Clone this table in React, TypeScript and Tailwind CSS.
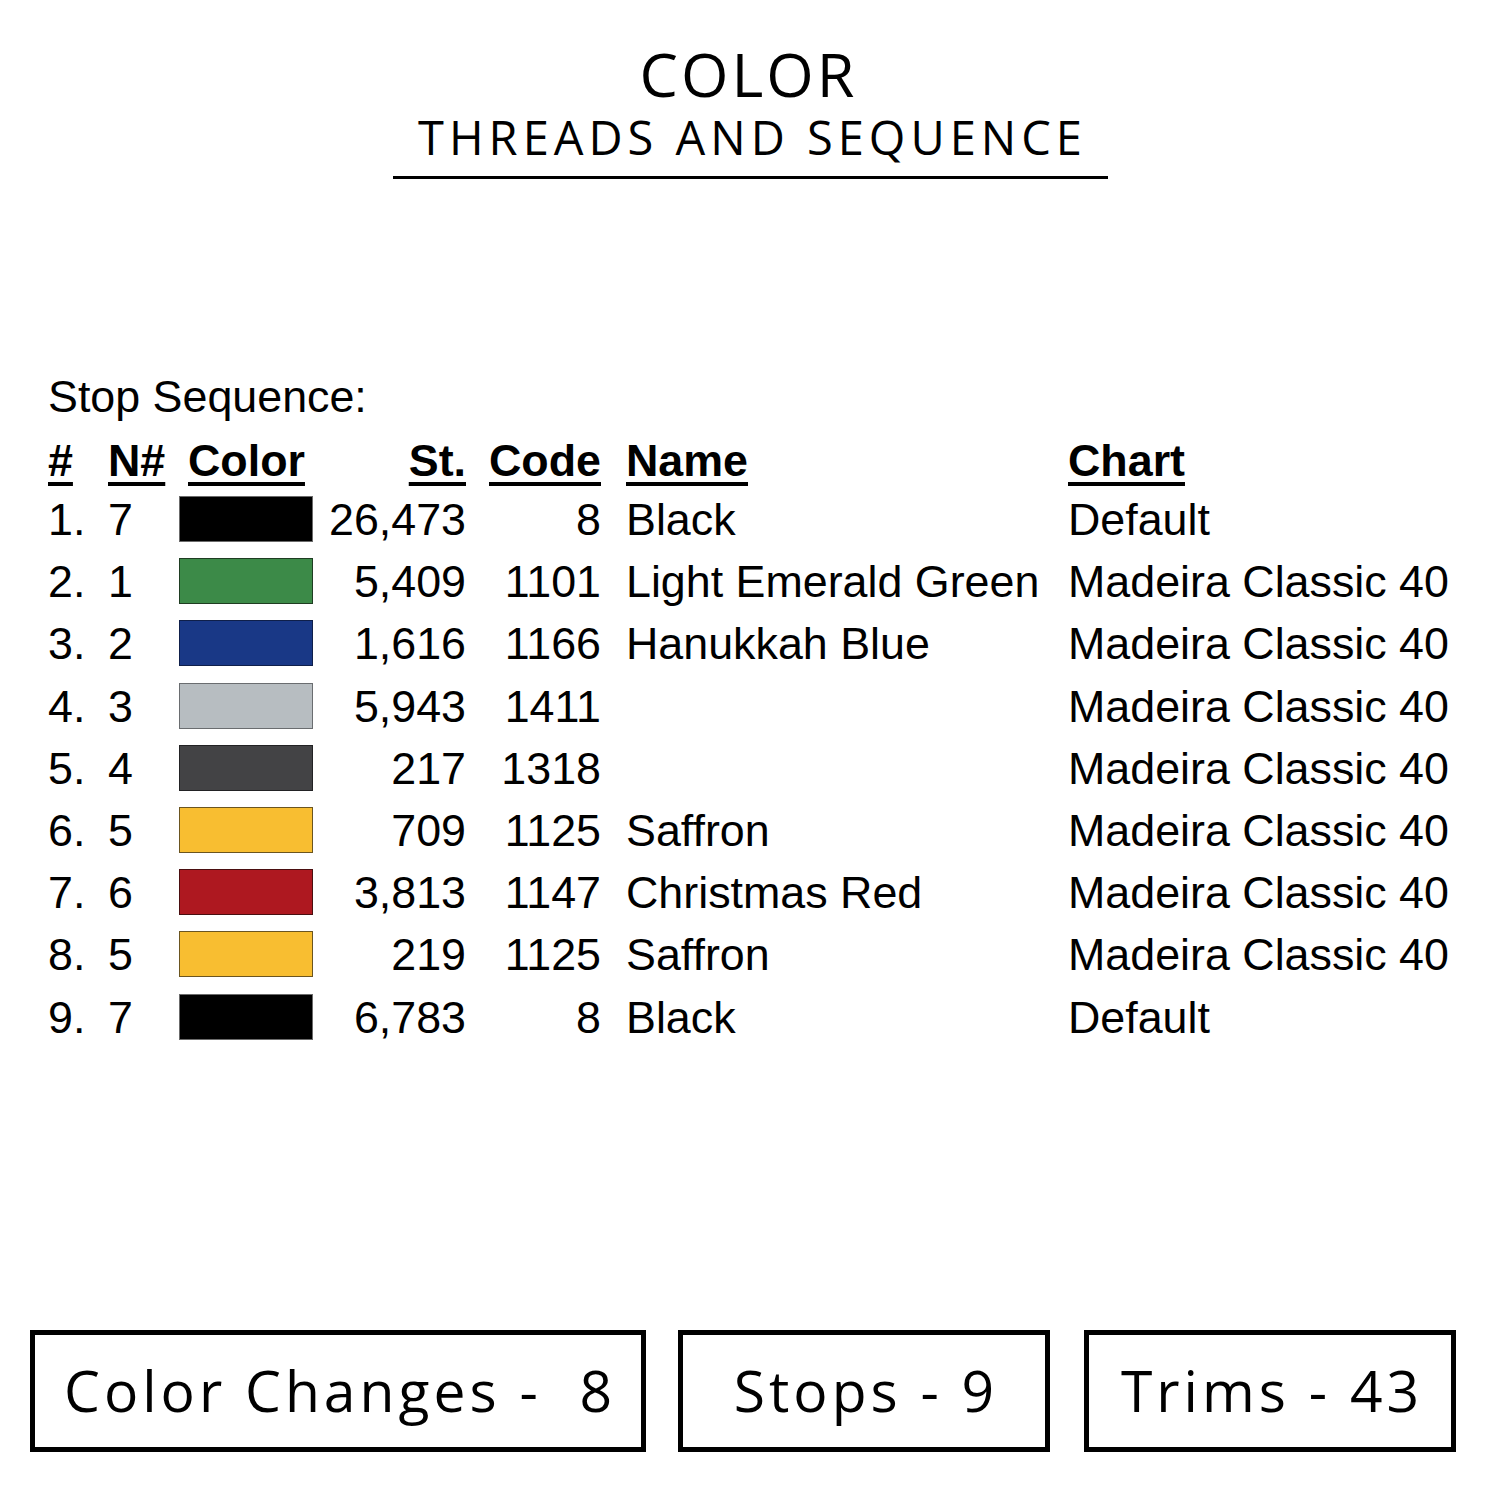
import React from "react";

type Row = { n: string; nn: string; color: string; border: string; st: string; code: string; name: string; chart: string };

const rows: Row[] = [
  { n: "1.", nn: "7", color: "#000000", border: "#6b6b6b", st: "26,473", code: "8", name: "Black", chart: "Default" },
  { n: "2.", nn: "1", color: "#3c8a48", border: "#1f3d22", st: "5,409", code: "1101", name: "Light Emerald Green", chart: "Madeira Classic 40" },
  { n: "3.", nn: "2", color: "#193886", border: "#0f1f4a", st: "1,616", code: "1166", name: "Hanukkah Blue", chart: "Madeira Classic 40" },
  { n: "4.", nn: "3", color: "#b7bdc1", border: "#6a6d70", st: "5,943", code: "1411", name: "", chart: "Madeira Classic 40" },
  { n: "5.", nn: "4", color: "#434345", border: "#222224", st: "217", code: "1318", name: "", chart: "Madeira Classic 40" },
  { n: "6.", nn: "5", color: "#f8be31", border: "#6b5520", st: "709", code: "1125", name: "Saffron", chart: "Madeira Classic 40" },
  { n: "7.", nn: "6", color: "#ae1820", border: "#4a0e10", st: "3,813", code: "1147", name: "Christmas Red", chart: "Madeira Classic 40" },
  { n: "8.", nn: "5", color: "#f8be31", border: "#6b5520", st: "219", code: "1125", name: "Saffron", chart: "Madeira Classic 40" },
  { n: "9.", nn: "7", color: "#000000", border: "#6b6b6b", st: "6,783", code: "8", name: "Black", chart: "Default" },
];

const grid = "grid grid-cols-[60px_71px_134px_153px_135px_467px_1fr] items-center";
const ul = "underline decoration-[4px] underline-offset-[6px]";

export default function App() {
  return (
    <div className="w-[1500px] h-[1500px] bg-white text-black flex flex-col">
      {/* Title */}
      <div
        className="flex flex-col items-center pt-[44px]"
        style={{ fontFamily: '"Open Sans", sans-serif' }}
      >
        <div className="text-[61px] leading-[60px] font-medium tracking-[3px] pl-[3px] mr-[6px]">COLOR</div>
        <div className="text-[47px] leading-[50px] mt-[8px] tracking-[5px] pl-[5px]">THREADS AND SEQUENCE</div>
        <div className="w-[715px] h-[3px] bg-black mt-[14px] ml-[1px]" />
      </div>

      {/* Table */}
      <div
        className="pl-[48px] mt-[186px] text-[44.8px]"
        style={{ fontFamily: '"Liberation Sans", Arial, sans-serif' }}
      >
        <div className="h-[62px] leading-[62px]">Stop Sequence:</div>
        <div className={`${grid} h-[62px] leading-[62px] font-bold mt-[2px]`}>
          <span className={ul}>#</span>
          <span className={ul}>N#</span>
          <span className="pl-[9px]"><span className={ul}>Color</span></span>
          <span className="text-right"><span className={ul}>St.</span></span>
          <span className="text-right"><span className={ul}>Code</span></span>
          <span className="pl-[25px]"><span className={ul}>Name</span></span>
          <span><span className={ul}>Chart</span></span>
        </div>
        <div className="mt-[-3px]">
          {rows.map((r, i) => (
            <div key={i} className={`${grid} h-[62.2px] leading-[62px]`}>
              <span>{r.n}</span>
              <span>{r.nn}</span>
              <span
                className="block h-[46px] w-[134px] border"
                style={{ backgroundColor: r.color, borderColor: r.border }}
              />
              <span className="text-right">{r.st}</span>
              <span className="text-right">{r.code}</span>
              <span className="pl-[25px] whitespace-nowrap">{r.name}</span>
              <span className="whitespace-nowrap">{r.chart}</span>
            </div>
          ))}
        </div>
      </div>

      {/* Bottom boxes */}
      <div
        className="mt-auto mb-[48px] pl-[30px] flex gap-[32px] text-[57px] tracking-[4px]"
        style={{ fontFamily: '"Open Sans", sans-serif' }}
      >
        <div className="w-[616px] h-[122px] border-[5px] border-black flex items-center justify-center whitespace-pre pl-[4px]">
          {"Color Changes -  8"}
        </div>
        <div className="w-[372px] h-[122px] border-[5px] border-black flex items-center justify-center pl-[4px]">
          Stops - 9
        </div>
        <div className="w-[372px] h-[122px] border-[5px] border-black flex items-center justify-center ml-[2px] pl-[4px]">
          Trims - 43
        </div>
      </div>
    </div>
  );
}
